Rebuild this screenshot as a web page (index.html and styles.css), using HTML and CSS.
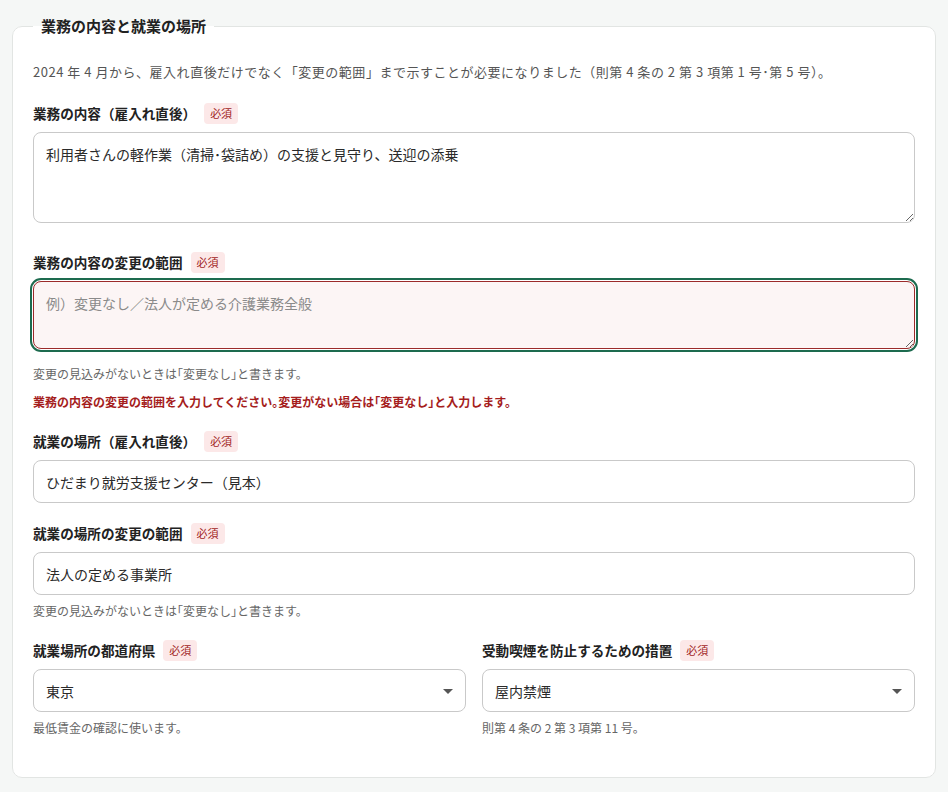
FILE: index.html
```html
<!DOCTYPE html>
<html lang="ja">

<head>
  <meta charset="utf-8">
  <link rel="stylesheet" href="styles.css">
</head>

<body>
  <div class="page">
    <fieldset class="section">
      <legend>業務の内容と就業の場所</legend>
      <p class="intro">2024 年 4 月から、雇入れ直後だけでなく「変更の範囲」まで示すことが必要になりました（則第 4 条の 2 第 3 項第 1 号･第 5 号）。</p>

<!-- 業務の内容 -->
      <div class="field">
        <div class="label-row">
          <label for="job">業務の内容（雇入れ直後）</label>
          <span class="badge">必須</span>
        </div>
        <textarea id="job" class="input" rows="3">利用者さんの軽作業（清掃･袋詰め）の支援と見守り、送迎の添乗</textarea>
      </div>

      <div class="field">
        <div class="label-row">
          <label for="jobRange">業務の内容の変更の範囲</label>
          <span class="badge">必須</span>
        </div>
        <textarea id="jobRange" class="input error focus" rows="2" placeholder="例）変更なし／法人が定める介護業務全般"></textarea>
        <p class="hint">変更の見込みがないときは「変更なし」と書きます。</p>
        <p class="error-text">業務の内容の変更の範囲を入力してください。変更がない場合は「変更なし」と入力します。</p>
      </div>

<!-- 就業の場所 -->
      <div class="field">
        <div class="label-row">
          <label for="place">就業の場所（雇入れ直後）</label>
          <span class="badge">必須</span>
        </div>
        <input type="text" id="place" class="input" value="ひだまり就労支援センター（見本）">
      </div>

      <div class="field">
        <div class="label-row">
          <label for="placeRange">就業の場所の変更の範囲</label>
          <span class="badge">必須</span>
        </div>
        <input type="text" id="placeRange" class="input" value="法人の定める事業所">
        <p class="hint">変更の見込みがないときは「変更なし」と書きます。</p>
      </div>

      <div class="field-grid">
        <div class="field">
          <div class="label-row">
            <label for="pref">就業場所の都道府県</label>
            <span class="badge">必須</span>
          </div>
          <div class="select-wrap">
            <select id="pref" class="input">
              <option>東京</option>
              <option>神奈川</option>
              <option>埼玉</option>
            </select>
          </div>
          <p class="hint">最低賃金の確認に使います。</p>
        </div>
        <div class="field">
          <div class="label-row">
            <label for="smoke">受動喫煙を防止するための措置</label>
            <span class="badge">必須</span>
          </div>
          <div class="select-wrap">
            <select id="smoke" class="input">
              <option>屋内禁煙</option>
              <option>喫煙室あり</option>
              <option>その他</option>
            </select>
          </div>
          <p class="hint">則第 4 条の 2 第 3 項第 11 号。</p>
        </div>
      </div>
    </fieldset>
  </div>
</body>

</html>
```

FILE: styles.css
```css
body {
  margin: 0;
  background-color: #f5f7f6;
  font-family: "Noto Sans CJK JP", "Noto Sans", sans-serif;
  color: #222;
}

.page {
  padding: 16px 12px 12px;
}

.section {
  margin: 0;
  padding: 26px 20px 20px;
  background-color: #fff;
  border: 1px solid #e2e5e3;
  border-radius: 10px;
}

.section legend {
  padding: 0 8px;
  font-size: 15px;
  font-weight: bold;
  line-height: 20px;
  color: #222;
}

.intro {
  margin: 0 0 21px;
  font-size: 13px;
  line-height: 20px;
  letter-spacing: 0.04em;
  color: #555;
}

.field {
  display: flex;
  flex-direction: column;
  margin-bottom: 20px;
}

.label-row {
  display: flex;
  align-items: center;
  gap: 8px;
  height: 21px;
  margin-bottom: 8px;
}

.label-row label {
  font-size: 13.6px;
  font-weight: bold;
  line-height: 21px;
}

.badge {
  padding: 2px 6px;
  font-size: 11px;
  line-height: 17px;
  color: #a11d1d;
  background-color: #fce8e8;
  border-radius: 4px;
}

.input {
  display: block;
  box-sizing: border-box;
  width: 100%;
  margin: 0;
  padding: 0 12px;
  font-family: inherit;
  font-size: 14px;
  color: #2a2a2a;
  background-color: #fff;
  border: 1px solid #c9c9c9;
  border-radius: 8px;
}

input.input,
select.input {
  height: 43px;
}

textarea.input {
  padding: 10px 12px;
  line-height: 23px;
  margin-bottom: 9px;
  resize: vertical;
}

.input::placeholder {
  color: #8a8a8a;
}

.input.error {
  background-color: #fcf5f5;
  border-color: #9b2a2a;
}

.input.focus {
  outline: 2px solid #1d6b4f;
  outline-offset: 1px;
}

.hint {
  margin: 7px 0 0;
  font-size: 12px;
  line-height: 18px;
  font-feature-settings: "halt";
  color: #666;
}

.error-text {
  margin: 10px 0 0;
  font-size: 12px;
  font-weight: bold;
  line-height: 18px;
  font-feature-settings: "halt";
  color: #a51d1d;
}

.field-grid {
  display: grid;
  grid-template-columns: 1fr 1fr;
  gap: 16px;
}

.select-wrap {
  position: relative;
}

.select-wrap select {
  appearance: none;
  -webkit-appearance: none;
  padding-right: 36px;
}

.select-wrap::after {
  content: "";
  position: absolute;
  top: 50%;
  right: 13px;
  margin-top: -2px;
  border-left: 5px solid transparent;
  border-right: 5px solid transparent;
  border-top: 5px solid #555;
  pointer-events: none;
}
```
